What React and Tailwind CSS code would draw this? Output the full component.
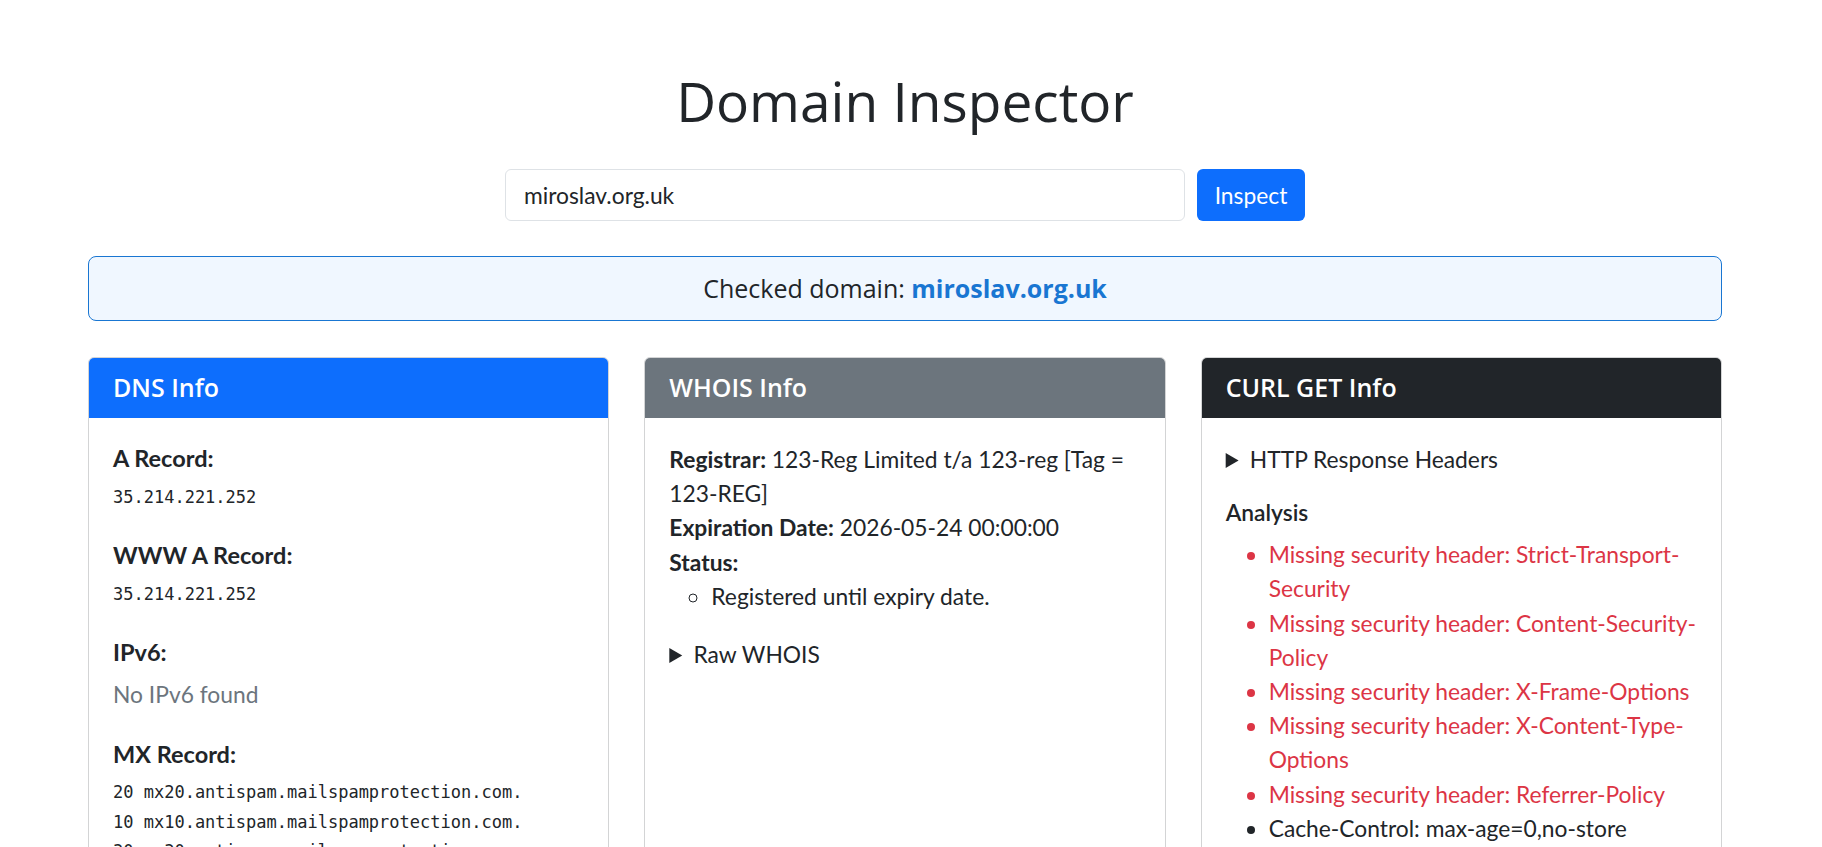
import React from "react";

const dnsSections = [
  { label: "A Record:", values: ["35.214.221.252"] },
  { label: "WWW A Record:", values: ["35.214.221.252"] },
  { label: "IPv6:", empty: "No IPv6 found" },
  {
    label: "MX Record:",
    values: [
      "20 mx20.antispam.mailspamprotection.com.",
      "10 mx10.antispam.mailspamprotection.com.",
      "30 mx30.antispam.mailspamprotection.com.",
    ],
  },
];

const analysis = [
  { text: "Missing security header: Strict-Transport-Security", bad: true },
  { text: "Missing security header: Content-Security-Policy", bad: true },
  { text: "Missing security header: X-Frame-Options", bad: true },
  { text: "Missing security header: X-Content-Type-Options", bad: true },
  { text: "Missing security header: Referrer-Policy", bad: true },
  { text: "Cache-Control: max-age=0,no-store", bad: false },
];

const Card = ({ title, headerClass, children }) => (
  <div className="flex flex-col rounded-[6px] border border-[#d3d4d5] bg-white">
    <div
      className={`flex h-[60px] items-center rounded-t-[5px] px-6 font-['Open_Sans',sans-serif] text-[25px] font-semibold text-white ${headerClass}`}
    >
      {title}
    </div>
    <div className="flex-1 px-6 pt-6 pb-6 text-[22.8px] leading-[34.2px]">
      {children}
    </div>
  </div>
);

export default function App() {
  const domain = "miroslav.org.uk";

  return (
    <div className="min-h-screen w-[1810px] bg-white font-['Lato',sans-serif] text-[#212529]">
      <div className="px-[88px] pt-[67px] pb-10">
        <h1 className="mb-[35px] text-center font-['Open_Sans',sans-serif] text-[55px] font-medium leading-[67px]">
          Domain Inspector
        </h1>

        <form
          className="flex justify-center gap-[12px]"
          onSubmit={(e) => e.preventDefault()}
        >
          <input
            type="text"
            defaultValue={domain}
            className="h-[52px] w-[680px] rounded-[6px] border border-[#dee2e6] bg-white px-[18px] font-['Lato',sans-serif] text-[22.8px] text-[#212529] outline-none"
          />
          <button
            type="submit"
            className="h-[52px] w-[108px] rounded-[6px] bg-[#0d6efd] font-['Lato',sans-serif] text-[22.8px] text-white"
          >
            Inspect
          </button>
        </form>

        <div className="mt-[35px] flex h-[65px] items-center justify-center rounded-[8px] border border-[#1976d2] bg-[#f0f7ff] font-['Open_Sans',sans-serif] text-[25px] font-medium">
          <span>
            Checked domain:{" "}
            <span className="font-bold text-[#1976d2]">{domain}</span>
          </span>
        </div>

        <div className="mt-[36px] grid grid-cols-3 gap-[35px]">
          <Card title="DNS Info" headerClass="bg-[#0d6efd]">
            {dnsSections.map((s) => (
              <div key={s.label} className="mb-[27px]">
                <h5 className="mb-[7px] text-[23.5px] font-bold leading-[33.6px]">
                  {s.label}
                </h5>
                {s.empty ? (
                  <p className="text-[#6c757d]">{s.empty}</p>
                ) : (
                  s.values.map((v) => (
                    <div
                      key={v}
                      className="font-['DejaVu_Sans_Mono',monospace] text-[17px] leading-[29.4px]"
                    >
                      {v}
                    </div>
                  ))
                )}
              </div>
            ))}
          </Card>

          <Card title="WHOIS Info" headerClass="bg-[#6c757d]">
            <div>
              <strong className="font-bold">Registrar:</strong> 123-Reg Limited
              t/a 123-reg [Tag = 123-REG]
            </div>
            <div>
              <strong className="font-bold">Expiration Date:</strong> 2026-05-24
              00:00:00
            </div>
            <div>
              <strong className="font-bold">Status:</strong>
            </div>
            <ul className="list-[circle] pl-[42px]">
              <li>Registered until expiry date.</li>
            </ul>
            <details className="mt-[24px]">
              <summary className="cursor-pointer">Raw WHOIS</summary>
            </details>
          </Card>

          <Card title="CURL GET Info" headerClass="bg-[#212529]">
            <details>
              <summary className="cursor-pointer">HTTP Response Headers</summary>
            </details>
            <h6 className="mt-[23px] mb-[11px] text-[22.8px] font-semibold leading-[27px]">
              Analysis
            </h6>
            <ul className="list-disc pl-[43px]">
              {analysis.map((a) => (
                <li
                  key={a.text}
                  className={a.bad ? "text-[#dc3545]" : "text-[#212529]"}
                >
                  {a.text}
                </li>
              ))}
            </ul>
          </Card>
        </div>
      </div>
    </div>
  );
}
